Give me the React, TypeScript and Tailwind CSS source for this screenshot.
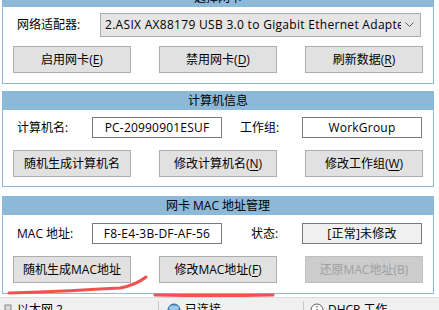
import React from 'react';

const font = { fontFamily: '"Open Sans", "Noto Sans CJK SC", sans-serif' };

const Panel: React.FC<{ title: string; className?: string; children: React.ReactNode }> = ({
  title,
  className,
  children,
}) => (
  <div className={`w-[432px] ${className ?? ''}`}>
    <div className="h-[19px] bg-[#8db9d8] text-center text-[12px] leading-[19px] text-black">{title}</div>
    <div className="border border-t-0 border-[#8db9d8] bg-white px-[10px]">{children}</div>
  </div>
);

const Btn: React.FC<{ children: React.ReactNode; disabled?: boolean }> = ({ children, disabled }) => (
  <button
    className={`h-[27px] border text-[12px] ${
      disabled ? 'border-[#bfbfbf] bg-[#cccccc] text-[#a0a0a0]' : 'border-[#adadad] bg-[#e1e1e1] text-black'
    }`}
  >
    {children}
  </button>
);

const Key: React.FC<{ k: string }> = ({ k }) => (
  <>
    (<span className="underline underline-offset-2">{k}</span>)
  </>
);

const Field: React.FC<{ value: string; gray?: boolean; w: string }> = ({ value, gray, w }) => (
  <div
    className={`${w} h-[21px] border border-[#7a7a7a] text-center text-[12px] leading-[19px] tracking-[0.2px] ${
      gray ? 'bg-[#f0f0f0]' : 'bg-white'
    }`}
  >
    {value}
  </div>
);

export default function App() {
  return (
    <div className="relative h-[310px] w-[439px] overflow-hidden bg-white text-black" style={font}>
      <div className="flex flex-col px-[2px]">
        <Panel title="选择网卡" className="mt-[-12px]">
          <div className="flex items-center pt-[6px]">
            <span className="ml-[4px] w-[83px] text-[12px]">网络适配器:</span>
            <div className="flex h-[24px] w-[321px] items-center justify-between border border-[#acacac] bg-[#e5e5e5] pl-[4px] pr-[6px] text-[12px]">
              <span className="overflow-hidden whitespace-nowrap tracking-[0.3px]">
                2.ASIX AX88179 USB 3.0 to Gigabit Ethernet Adapte
              </span>
              <svg width="9" height="6" viewBox="0 0 9 6" className="ml-[4px] shrink-0">
                <path d="M0.5 0.5 L4.5 4.5 L8.5 0.5" fill="none" stroke="#606060" strokeWidth="1" />
              </svg>
            </div>
          </div>
          <div className="grid grid-cols-3 gap-[28px] pb-[10px] pt-[9px]">
            <Btn>
              启用网卡<Key k="E" />
            </Btn>
            <Btn>
              禁用网卡<Key k="D" />
            </Btn>
            <Btn>
              刷新数据<Key k="R" />
            </Btn>
          </div>
        </Panel>

        <Panel title="计算机信息" className="mt-[7px]">
          <div className="flex items-center pt-[7px] text-[12px]">
            <span className="ml-[4px] w-[75px]">计算机名:</span>
            <Field value="PC-20990901ESUF" w="w-[130px]" />
            <span className="ml-[18px] w-[62px]">工作组:</span>
            <Field value="WorkGroup" w="w-[120px]" />
          </div>
          <div className="grid grid-cols-3 gap-[28px] pb-[9px] pt-[12px]">
            <Btn>随机生成计算机名</Btn>
            <Btn>
              修改计算机名<Key k="N" />
            </Btn>
            <Btn>
              修改工作组<Key k="W" />
            </Btn>
          </div>
        </Panel>

        <Panel title="网卡 MAC 地址管理" className="mt-[9px]">
          <div className="flex items-center pt-[8px] text-[12px]">
            <span className="ml-[4px] w-[75px]">MAC 地址:</span>
            <Field value="F8-E4-3B-DF-AF-56" w="w-[130px]" />
            <span className="ml-[29px] w-[51px]">状态:</span>
            <Field value="[正常]未修改" gray w="w-[120px]" />
          </div>
          <div className="grid grid-cols-3 gap-[28px] pb-[10px] pt-[12px]">
            <Btn>随机生成MAC地址</Btn>
            <Btn>
              修改MAC地址<Key k="F" />
            </Btn>
            <Btn disabled>还原MAC地址(B)</Btn>
          </div>
        </Panel>
      </div>

      <div className="mt-[3px] flex h-[20px] items-start border-t border-[#dcdcdc] bg-[#f0f0f0] pt-[3px] text-[12px]">
        <div className="flex w-[158px] items-center pl-[4px]">
          <svg width="10" height="14" viewBox="0 0 10 14" className="mr-[3px]">
            <rect x="1" y="2" width="6" height="10" fill="#d8d8d8" stroke="#8a8a8a" />
            <rect x="2" y="8" width="4" height="3" fill="#3aa860" />
          </svg>
          <span>以太网 2</span>
        </div>
        <div className="h-[20px] border-l border-[#c8c8c8]" />
        <div className="flex w-[144px] items-center pl-[8px]">
          <svg width="14" height="14" viewBox="0 0 14 14" className="mr-[4px]">
            <circle cx="7" cy="7" r="6" fill="#4a90c8" stroke="#2c6aa0" />
            <ellipse cx="7" cy="5" rx="5" ry="2.5" fill="#9cc8ea" />
          </svg>
          <span>已连接</span>
        </div>
        <div className="h-[20px] border-l border-[#c8c8c8]" />
        <div className="flex items-center pl-[6px]">
          <svg width="14" height="14" viewBox="0 0 14 14" className="mr-[4px]">
            <circle cx="7" cy="7" r="6" fill="#fff" stroke="#606060" />
            <rect x="6.5" y="3" width="1" height="1.5" fill="#404040" />
            <rect x="6.5" y="6" width="1" height="5" fill="#404040" />
          </svg>
          <span>DHCP 工作</span>
        </div>
      </div>

      <svg className="pointer-events-none absolute left-0 top-0" width="439" height="310">
        <path
          d="M9 293 L40 292 Q70 291 100 289 L120 288 Q136 285 146 277"
          fill="none"
          stroke="#f05252"
          strokeWidth="3"
          strokeLinecap="round"
        />
        <path d="M155 295 Q215 296 273 295" fill="none" stroke="#f05252" strokeWidth="3" strokeLinecap="round" />
      </svg>
    </div>
  );
}
